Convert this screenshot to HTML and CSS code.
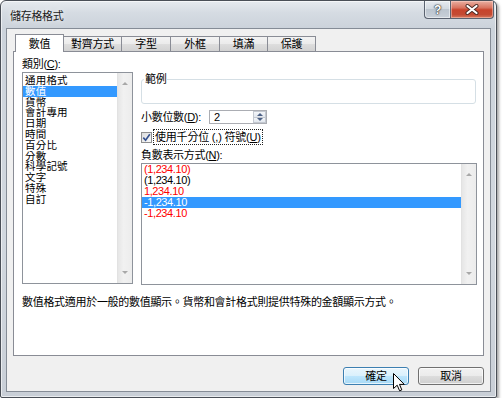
FILE: index.html
```html
<!DOCTYPE html>
<html lang="zh-Hant">
<head>
<meta charset="utf-8">
<title>儲存格格式</title>
<link rel="stylesheet" href="styles.css">
</head>
<body>
<div class="window">
  <div class="titlebar">
    <span class="title">儲存格格式</span>
    <div class="caption-btns">
      <span class="cbtn help">?</span>
      <span class="cbtn close">
        <svg width="14" height="11" viewBox="0 0 14 11"><path d="M2.5 2 L11.5 9 M11.5 2 L2.5 9" stroke="#4a2a24" stroke-width="4" stroke-linecap="round"/><path d="M2.5 2 L11.5 9 M11.5 2 L2.5 9" stroke="#fff" stroke-width="2.2" stroke-linecap="round"/></svg>
      </span>
    </div>
  </div>
  <div class="client">
    <div class="tabs">
      <div class="tab active w1">數值</div>
      <div class="tab w2">對齊方式</div>
      <div class="tab w3">字型</div>
      <div class="tab w3">外框</div>
      <div class="tab w5">填滿</div>
      <div class="tab w5">保護</div>
    </div>
    <div class="panel">
      <div class="top">
        <div class="col-left">
          <div class="lbl">類別(<u>C</u>):</div>
          <div class="listbox cat">
            <ul class="items">
              <li>通用格式</li>
              <li class="sel">數值</li>
              <li>貨幣</li>
              <li>會計專用</li>
              <li>日期</li>
              <li>時間</li>
              <li>百分比</li>
              <li>分數</li>
              <li>科學記號</li>
              <li>文字</li>
              <li>特殊</li>
              <li>自訂</li>
            </ul>
            <div class="vscroll"><span class="arr up"></span><span class="arr down"></span></div>
          </div>
        </div>
        <div class="col-right">
          <fieldset class="sample"><legend>範例</legend></fieldset>
          <div class="dec">
            <span class="dec-lbl">小數位數(<u>D</u>):</span>
            <div class="spin">
              <span class="spin-val">2</span>
              <span class="spin-btns"><span class="sb"><span class="arr up blue"></span></span><span class="sb"><span class="arr down blue"></span></span></span>
            </div>
          </div>
          <div class="chk">
            <span class="box"><svg width="9" height="9" viewBox="0 0 9 9"><path d="M1.3 4.6 L3.6 7.2 L7.8 1.2" fill="none" stroke="#34508f" stroke-width="1.6"/></svg></span>
            <span class="chk-lbl">使用千分位 (,) 符號(<u>U</u>)</span>
          </div>
          <div class="lbl neg-lbl">負數表示方式(<u>N</u>):</div>
          <div class="listbox neg">
            <ul class="items">
              <li class="red">(1,234.10)</li>
              <li>(1,234.10)</li>
              <li class="red">1,234.10</li>
              <li class="sel">-1,234.10</li>
              <li class="red">-1,234.10</li>
            </ul>
            <div class="vscroll"><span class="arr up"></span><span class="arr down"></span></div>
          </div>
        </div>
      </div>
      <p class="desc">數值格式適用於一般的數值顯示。貨幣和會計格式則提供特殊的金額顯示方式。</p>
    </div>
    <div class="actions">
      <button class="btn default">確定<svg class="cursor" width="13" height="19" viewBox="0 0 13 19"><path d="M0.5 0.5 V15.5 L4.2 12.2 L6.6 17.8 L8.8 16.9 L6.5 11.4 L11.3 11.4 Z" fill="#fff" stroke="#000" stroke-width="1" stroke-linejoin="round"/></svg></button>
      <button class="btn">取消</button>
    </div>
  </div>
</div>
</body>
</html>
```
FILE: styles.css
```css
* { box-sizing: border-box; }
body {
  margin: 0;
  background: #fff;
  font-family: "Liberation Sans", "Noto Sans CJK TC", sans-serif;
  font-size: 11px;
  letter-spacing: -0.3px;
  color: #000;
}
u { text-decoration: underline; }

.window {
  width: 497px;
  height: 398px;
  border: 1px solid #4a4f57;
  border-radius: 6px 6px 2px 2px;
  background: linear-gradient(180deg, #e6eaef 0, #d5dbe2 12px, #ccd3db 27px, #d2d8df 60%, #c9cfd7 100%);
  box-shadow: inset 0 0 0 1px rgba(255,255,255,.6), 2px 2px 3px rgba(0,0,0,.35);
  display: flex;
  flex-direction: column;
}

.titlebar {
  height: 27px;
  flex: none;
  display: flex;
  justify-content: space-between;
  align-items: flex-start;
  padding: 0 2px 0 9px;
}
.title {
  margin-top: 9px;
  line-height: 13px;
  color: #1c1c1c;
  text-shadow: 0 0 5px rgba(255,255,255,.9);
}
.caption-btns { display: flex; }
.cbtn {
  height: 18px;
  border: 1px solid #5a6270;
  border-top: none;
  display: flex;
  align-items: center;
  justify-content: center;
}
.help {
  width: 26px;
  border-right: none;
  border-radius: 0 0 0 4px;
  background: linear-gradient(180deg, #e7ebf0 0, #d2d9e1 45%, #bcc5cf 50%, #c9d0d9 100%);
  box-shadow: inset 0 0 0 1px rgba(255,255,255,.5);
  color: #fff;
  font-weight: bold;
  font-size: 12px;
  line-height: 14px;
  text-shadow: 0 0 1px #333, 0 0 1px #333, 0 0 2px #333;
}
.close {
  width: 44px;
  border-radius: 0 0 4px 0;
  background: linear-gradient(180deg, #eab0a2 0, #d8735f 40%, #c8442c 52%, #c44a33 80%, #d77a5f 100%);
  box-shadow: inset 0 0 0 1px rgba(255,220,210,.45);
}

.client {
  flex: 1;
  margin: 0 5px 5px 5px;
  background: #f0f0f0;
  border: 1px solid #858c96;
  padding: 5px 6px 0 6px;
  display: flex;
  flex-direction: column;
}

.tabs {
  display: flex;
  align-items: flex-end;
  height: 17px;
  margin-left: 2px;
  position: relative;
  z-index: 1;
}
.tab {
  height: 15px;
  border: 1px solid #898c95;
  border-bottom: none;
  margin-left: -1px;
  background: linear-gradient(180deg, #f3f3f3 0, #ebebeb 50%, #dedede 50%, #d2d2d2 100%);
  text-align: center;
  line-height: 13px;
  padding-top: 1px;
  white-space: nowrap;
}
.tab:first-child { margin-left: 0; }
.tab.active {
  height: 18px;
  margin-bottom: -1px;
  background: #fff;
  padding-top: 3px;
  position: relative;
  z-index: 2;
}
.w1 { width: 49px; }
.w2 { width: 59px; }
.w3 { width: 50px; }
.w5 { width: 49px; }

.panel {
  height: 305px;
  flex: none;
  background: #fff;
  border: 1px solid #898c95;
  padding: 5px 6px 0 8px;
}
.top {
  display: grid;
  grid-template-columns: 111px 336px;
  column-gap: 8px;
  align-items: start;
}
.lbl {
  height: 14px;
  line-height: 14px;
  white-space: nowrap;
}

.listbox {
  display: flex;
  border: 1px solid #8e939b;
  background: #fff;
}
.items {
  flex: 1;
  margin: 0;
  list-style: none;
  padding: 0;
}
.cat { height: 212px; margin-top: 1px; }
.cat .items { padding-top: 2px; }
.cat li {
  height: 10.8px;
  line-height: 10.8px;
  padding-left: 2px;
  font-size: 10.5px;
  letter-spacing: 0.2px;
  white-space: nowrap;
}
.sel { background: #3399ff; color: #fff; }
.red { color: #ff0000; }

.vscroll {
  width: 15px;
  flex: none;
  background: linear-gradient(90deg, #e6e6e6 0, #f1f1f1 40%, #ececec 100%);
  border-left: 1px solid #e2e2e2;
  display: flex;
  flex-direction: column;
  justify-content: space-between;
  align-items: center;
  padding: 9px 0;
}
.arr {
  width: 0;
  height: 0;
  border-left: 3px solid transparent;
  border-right: 3px solid transparent;
}
.arr.up { border-bottom: 3px solid #a8a8a8; }
.arr.down { border-top: 3px solid #a8a8a8; }
.arr.up.blue { border-bottom-color: #4d6185; }
.arr.down.blue { border-top-color: #4d6185; }

.sample {
  margin: 16px 1px 0 0;
  padding: 0 0 0 2px;
  border: 1px solid #d5dfe5;
  border-radius: 3px;
  height: 31px;
  min-width: 0;
}
.sample legend {
  padding: 0 1px;
  line-height: 12px;
}

.dec {
  display: flex;
  align-items: center;
  height: 14px;
  margin-top: 6px;
}
.dec-lbl {
  width: 68px;
  white-space: nowrap;
  line-height: 14px;
}
.spin {
  width: 58px;
  height: 14px;
  border: 1px solid #abadb3;
  display: flex;
  background: #fff;
}
.spin-val {
  flex: 1;
  padding-left: 4px;
  line-height: 12px;
}
.spin-btns {
  width: 13px;
  display: flex;
  flex-direction: column;
}
.sb {
  flex: 1;
  display: flex;
  align-items: center;
  justify-content: center;
  background: linear-gradient(180deg, #f4f6f9, #e2e7ee);
  border: 1px solid #c3c8d0;
}
.sb + .sb { border-top: none; }

.chk {
  display: flex;
  align-items: center;
  height: 18px;
  margin-top: 4px;
}
.box {
  width: 11px;
  height: 11px;
  border: 1px solid #8f8f8f;
  background: linear-gradient(135deg, #dcdcdc, #fbfbfb);
  display: flex;
  align-items: center;
  justify-content: center;
}
.chk-lbl {
  margin-left: 1px;
  height: 16px;
  line-height: 14px;
  border: 1px dotted #222;
  padding: 0 1px;
  letter-spacing: -0.2px;
  white-space: nowrap;
}

.neg-lbl { margin-top: 3px; height: 13px; line-height: 13px; }
.neg { height: 122px; margin-top: 1px; }
.neg li {
  height: 11px;
  line-height: 11px;
  padding-left: 2px;
  letter-spacing: -0.4px;
  white-space: nowrap;
}

.desc {
  margin: 11px 0 0 0;
  line-height: 13px;
  white-space: nowrap;
}

.actions {
  display: flex;
  justify-content: flex-end;
  gap: 9px;
  margin-top: 11px;
}
.btn {
  width: 66px;
  height: 18px;
  padding: 0;
  border: 1px solid #707070;
  border-radius: 3px;
  background: linear-gradient(180deg, #f2f2f2 0, #ebebeb 50%, #dddddd 50%, #cfcfcf 100%);
  box-shadow: inset 0 0 0 1px rgba(255,255,255,.7);
  font: inherit;
  letter-spacing: -0.3px;
  line-height: 16px;
  color: #000;
}
.btn.default {
  position: relative;
  border-color: #3c7fb1;
  background: linear-gradient(180deg, #eaf6fd 0, #d9f0fc 50%, #bee6fd 50%, #a7d9f5 100%);
}
.cursor {
  position: absolute;
  left: 49px;
  top: 5px;
}
```
